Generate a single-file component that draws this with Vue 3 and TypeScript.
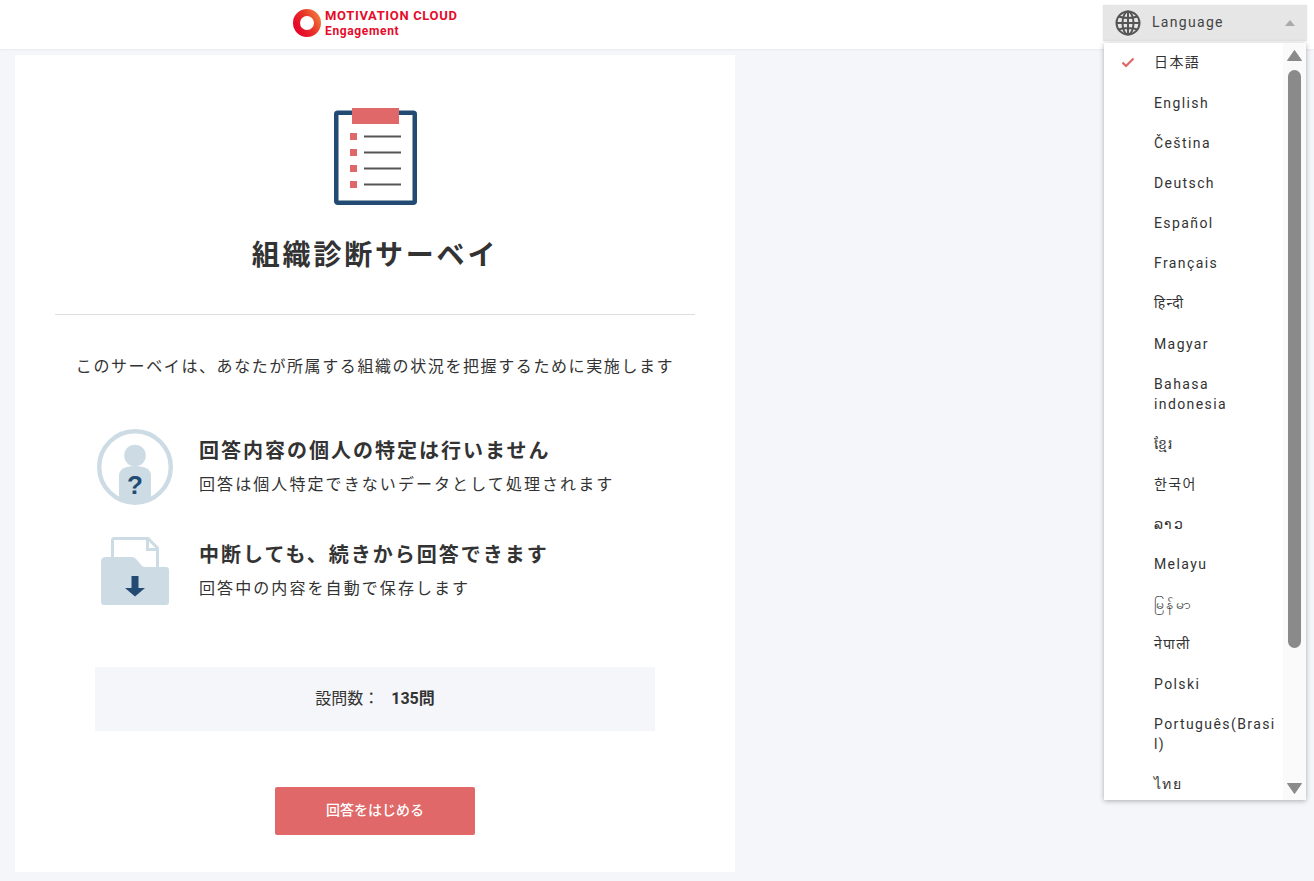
<script setup lang="ts">
const languages: string[] = [
  "日本語",
  "English",
  "Čeština",
  "Deutsch",
  "Español",
  "Français",
  "हिन्दी",
  "Magyar",
  "Bahasa indonesia",
  "ខ្មែរ",
  "한국어",
  "ລາວ",
  "Melayu",
  "မြန်မာ",
  "नेपाली",
  "Polski",
  "Português(Brasil)",
  "ไทย",
];

const tallRows = ["日本語", "हिन्दी"];
</script>

<template>
  <div class="page">
    <header class="header">
      <div class="logo">
        <svg class="logo-mark" viewBox="0 0 28 28" width="28" height="28">
          <defs>
            <linearGradient id="ring" x1="1" y1="0" x2="0" y2="0.6">
              <stop offset="0" stop-color="#f0793a" />
              <stop offset="0.5" stop-color="#e9352a" />
              <stop offset="1" stop-color="#e60b2a" />
            </linearGradient>
          </defs>
          <circle cx="14" cy="14" r="10.5" fill="none" stroke="url(#ring)" stroke-width="7" />
        </svg>
        <div class="logo-text">
          <span class="logo-main">MOTIVATION CLOUD</span>
          <span class="logo-sub">Engagement</span>
        </div>
      </div>
      <div class="lang">
        <button class="lang-button">
          <svg viewBox="0 0 26 26" width="26" height="26" fill="none" stroke="#555" stroke-width="2">
            <circle cx="13" cy="13" r="11.5" />
            <ellipse cx="13" cy="13" rx="5.5" ry="11.5" />
            <path d="M13 1.500v23M1.500 13h23M3.500 6.500q9.500 3 19 0M3.500 19.500q9.500-3 19 0" />
          </svg>
          <span class="lang-label">Language</span>
          <span class="caret"></span>
        </button>
        <div class="menu">
          <ul class="menu-list">
            <li
              v-for="(lang, i) in languages"
              :key="lang"
              class="menu-item"
              :class="{ tall: tallRows.includes(lang) }"
            >
              <svg v-if="i === 0" class="check" viewBox="0 0 14 11" width="14" height="11">
                <path d="M1.500 5.500 5 9l7.500-7.500" fill="none" stroke="#e06666" stroke-width="2.200" />
              </svg>
              {{ lang }}
            </li>
          </ul>
          <div class="scrollbar">
            <svg class="arrow" viewBox="0 0 15 11" width="15" height="11">
              <path d="M7.500 .5 14.500 10.500H.5z" fill="#8a8a8a" stroke="#8a8a8a" stroke-linejoin="round" />
            </svg>
            <span class="thumb"></span>
            <svg class="arrow arrow-down" viewBox="0 0 15 11" width="15" height="11">
              <path d="M7.500 10.500 14.500 .5H.5z" fill="#8a8a8a" stroke="#8a8a8a" stroke-linejoin="round" />
            </svg>
          </div>
        </div>
      </div>
    </header>

    <main class="card">
      <svg class="clipboard" viewBox="0 0 83 97" width="83" height="97">
        <rect x="2.250" y="4.750" width="78.500" height="90" rx="1.500" fill="#fff" stroke="#234a72" stroke-width="4.500" />
        <rect x="18" y="0" width="47" height="16" fill="#e06868" />
        <g fill="#e06868">
          <rect x="16" y="25" width="7" height="7" />
          <rect x="16" y="41" width="7" height="7" />
          <rect x="16" y="57" width="7" height="7" />
          <rect x="16" y="73" width="7" height="7" />
        </g>
        <g stroke="#555" stroke-width="2">
          <path d="M30 28.500h37M30 44.500h37M30 60.500h37M30 76.500h37" />
        </g>
      </svg>
      <h1 class="title">組織診断サーベイ</h1>
      <hr class="divider" />
      <p class="intro">このサーベイは、あなたが所属する組織の状況を把握するために実施します</p>

      <div class="points">
        <div class="point">
          <svg class="point-icon" viewBox="0 0 76 76" width="76" height="76">
            <circle cx="38" cy="38" r="35.800" fill="none" stroke="#cddce4" stroke-width="4.400" />
            <circle cx="38" cy="26.500" r="10.800" fill="#cddce4" />
            <path d="M22 70V47q0-10 16-10t16 10v23A36 36 0 0 1 22 70z" fill="#cddce4" />
            <text x="38" y="65" class="question">?</text>
          </svg>
          <div class="point-body">
            <h2 class="point-title">回答内容の個人の特定は行いません</h2>
            <p class="point-text">回答は個人特定できないデータとして処理されます</p>
          </div>
        </div>
        <div class="point">
          <svg class="point-icon" viewBox="0 0 76 76" width="76" height="76">
            <path d="M15.500 30V7q0-1.500 1.500-1.500h34L60.500 15V36" fill="#fff" stroke="#cddce4" stroke-width="3" />
            <path d="M50.500 5v11.500H61" fill="none" stroke="#cddce4" stroke-width="3" />
            <path d="M4 29q0-5 5-5h26q3 0 5 3l5 6q1 1 3 1h21q3 0 3 3v32q0 3-3 3H7q-3 0-3-3z" fill="#cddce4" />
            <path d="M34.500 43h7v12h6.500L38 63.500 28 55h6.500z" fill="#234a72" />
          </svg>
          <div class="point-body">
            <h2 class="point-title">中断しても、続きから回答できます</h2>
            <p class="point-text">回答中の内容を自動で保存します</p>
          </div>
        </div>
      </div>

      <div class="count">
        <span>設問数：</span>
        <strong>135問</strong>
      </div>
      <button class="start">回答をはじめる</button>
    </main>
  </div>
</template>

<style>
html,
body {
  background: #f5f6fa;
}
</style>

<style scoped>
.page {
  position: relative;
  height: 881px;
  overflow: hidden;
  background: #f5f6fa;
  font-family: Roboto, "Noto Sans CJK JP", "Noto Sans", sans-serif;
  color: #333;
}

.header {
  height: 49px;
  background: #fff;
  display: flex;
  align-items: flex-start;
  justify-content: space-between;
  padding-left: 293px;
  padding-right: 7px;
  box-shadow: 0 1px 2px rgba(0, 0, 0, 0.05);
}

.logo {
  display: flex;
  align-items: flex-start;
  gap: 4px;
  padding-top: 8px;
}

.logo-mark {
  display: block;
  margin-top: 1px;
}

.logo-text {
  display: flex;
  flex-direction: column;
  color: #e60b2a;
  font-weight: 700;
}

.logo-main {
  font-size: 13px;
  line-height: 15px;
  letter-spacing: 0.65px;
}

.logo-sub {
  font-size: 12px;
  line-height: 16px;
  letter-spacing: 0.65px;
}

.lang {
  position: relative;
  width: 204px;
  margin-top: 5px;
}

.lang-button {
  width: 100%;
  height: 36px;
  display: flex;
  align-items: center;
  padding: 0 12px;
  background: #e6e6e6;
  border: none;
  border-radius: 2px;
  box-shadow: 0 0 1px rgba(0, 0, 0, 0.3);
  font-family: inherit;
  color: #444;
}

.lang-label {
  margin-left: 11px;
  margin-bottom: 2px;
  font-size: 14px;
  letter-spacing: 1.3px;
}

.caret {
  margin-left: auto;
  width: 0;
  height: 0;
  border-left: 5px solid transparent;
  border-right: 5px solid transparent;
  border-bottom: 6px solid #aaa;
}

.menu {
  position: absolute;
  z-index: 2;
  top: 38px;
  left: 1px;
  width: 202px;
  height: 757px;
  display: flex;
  background: #fff;
  box-shadow: 0 1px 5px rgba(0, 0, 0, 0.3);
}

.menu-list {
  flex: 1;
  min-width: 0;
  margin: 0;
  padding: 0;
  list-style: none;
  overflow: hidden;
}

.menu-item {
  position: relative;
  padding: 9px 6px 11px 50px;
  font-size: 14px;
  line-height: 20px;
  letter-spacing: 1.4px;
  overflow-wrap: anywhere;
  color: #333;
}

.menu-item.tall {
  padding-bottom: 12px;
}

.check {
  position: absolute;
  left: 17px;
  top: 14px;
}

.scrollbar {
  flex: none;
  width: 23px;
  display: flex;
  flex-direction: column;
  align-items: center;
  background: #fafafa;
  padding: 7px 0 6px;
}

.arrow {
  display: block;
  flex: none;
}

.arrow-down {
  margin-top: auto;
}

.thumb {
  width: 13px;
  height: 578px;
  margin-top: 9px;
  background: #8a8a8a;
  border-radius: 7px;
}

.card {
  width: 720px;
  height: 817px;
  margin: 6px 0 0 15px;
  box-sizing: border-box;
  padding: 53px 40px 0;
  background: #fff;
  display: flex;
  flex-direction: column;
  align-items: center;
}

.clipboard {
  display: block;
}

.title {
  margin: 31px 0 0;
  font-size: 28px;
  line-height: 40px;
  font-weight: 700;
  letter-spacing: 0.1em;
  color: #333;
}

.divider {
  width: 100%;
  margin: 38px 0 0;
  border: none;
  border-top: 1px solid #ddd;
}

.intro {
  margin: 40px 0 0;
  font-size: 16px;
  line-height: 24px;
  letter-spacing: 0.1em;
}

.points {
  align-self: stretch;
  margin-top: 50px;
  padding-left: 42px;
  display: flex;
  flex-direction: column;
  gap: 28px;
}

.point {
  display: flex;
  align-items: center;
  gap: 26px;
}

.point-icon {
  display: block;
  flex: none;
}

.point-body {
  padding-bottom: 2px;
}

.question {
  font-family: "Liberation Sans", sans-serif;
  font-size: 26px;
  font-weight: 700;
  text-anchor: middle;
  fill: #234a72;
}

.point-title {
  margin: 0;
  font-size: 20px;
  line-height: 30px;
  font-weight: 700;
  letter-spacing: 0.1em;
}

.point-text {
  margin: 7px 0 0;
  font-size: 16px;
  line-height: 24px;
  letter-spacing: 0.13em;
}

.count {
  width: 560px;
  height: 64px;
  box-sizing: border-box;
  padding-bottom: 5px;
  margin-top: 58px;
  display: flex;
  align-items: center;
  justify-content: center;
  gap: 12px;
  background: #f5f6fa;
  font-size: 16px;
}

.count strong {
  font-weight: 700;
}

.start {
  width: 200px;
  height: 48px;
  margin-top: 56px;
  padding-bottom: 5px;
  border: none;
  border-radius: 2px;
  background: #e06868;
  color: #fff;
  font-family: inherit;
  font-size: 14px;
  font-weight: 500;
}
</style>
